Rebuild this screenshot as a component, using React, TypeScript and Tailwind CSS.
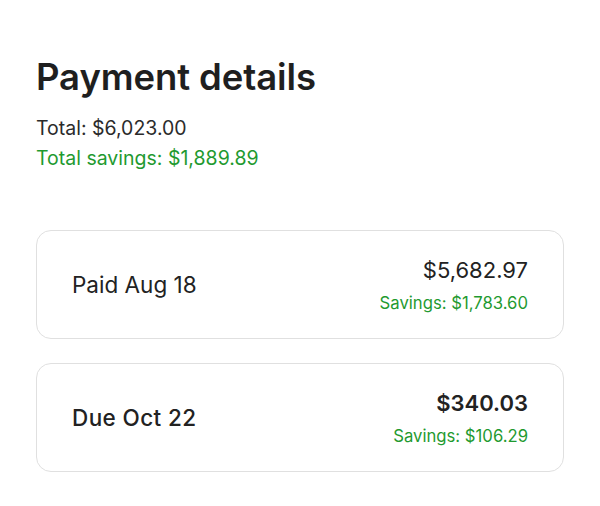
type Installment = {
  label: string
  amount: string
  savings: string
  due?: boolean
}

const installments: Installment[] = [
  { label: "Paid Aug 18", amount: "$5,682.97", savings: "$1,783.60" },
  { label: "Due Oct 22", amount: "$340.03", savings: "$106.29", due: true },
]

export default function App() {
  return (
    <div className="w-[600px] h-[506px] bg-white px-[36px] pt-[53px] text-[#222]" style={{ fontFamily: "Inter, 'Liberation Sans', sans-serif" }}>
      <h1 className="text-[36.5px] leading-[48px] font-semibold tracking-[-0.1px] text-[#1f1f1f]">Payment details</h1>
      <div className="mt-[12px] text-[19.5px] leading-[30px] text-[#2b2b2b]">Total: $6,023.00</div>
      <div className="text-[19.5px] leading-[30px] text-[#1f9a30]">Total savings: $1,889.89</div>
      <div className="mt-[57px] flex flex-col gap-[24px]">
        {installments.map((item) => (
          <div
            key={item.label}
            className="h-[109px] rounded-[15px] border border-[#e0e0e0] flex items-center justify-between px-[35px]"
          >
            <span className={`text-[22.5px] text-[#222] ${item.due ? "font-medium tracking-[0.4px]" : ""}`}>{item.label}</span>
            <div className="flex flex-col items-end">
              <span className={`text-[22px] leading-[30px] text-[#222] ${item.due ? "font-semibold" : ""}`}>{item.amount}</span>
              <span className="mt-[6px] text-[16.7px] leading-[24px] text-[#1f9a30]">Savings: {item.savings}</span>
            </div>
          </div>
        ))}
      </div>
    </div>
  )
}
